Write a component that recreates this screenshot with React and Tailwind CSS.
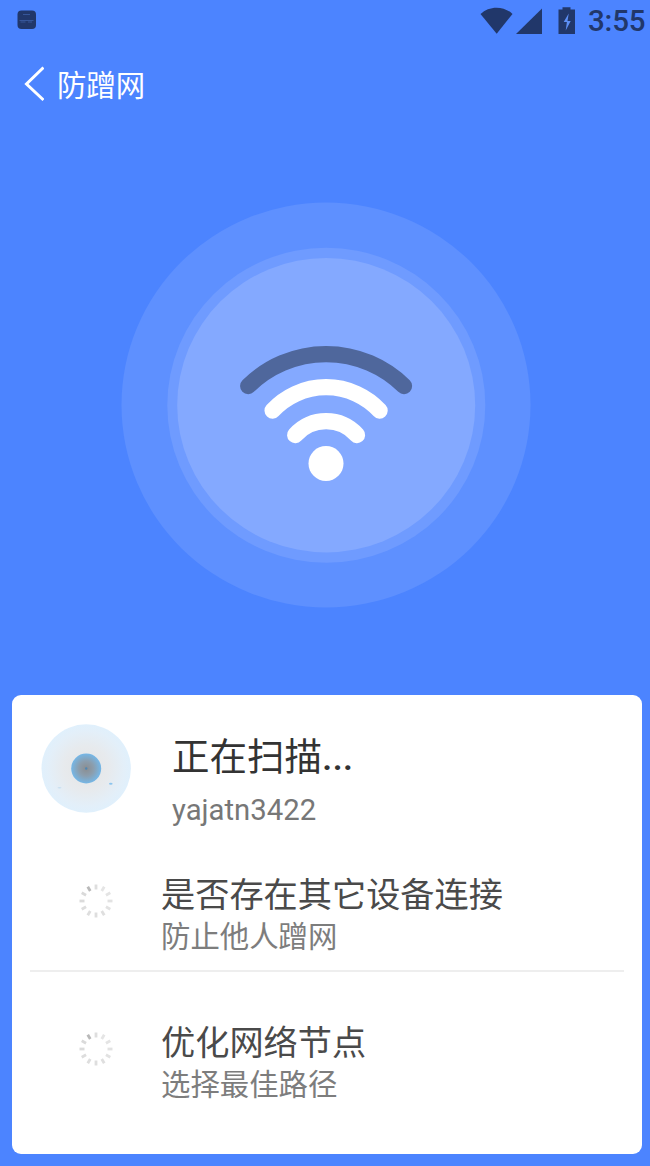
/**
 * Status bar icons and clock along the top edge of the screen.
 */
const StatusBar = () => {
  return (
    <header className="flex h-10 items-center justify-between pl-[17px] pr-[5px] text-[#21376a]">
      <svg className="size-5" viewBox="0 0 20 20">
        <rect x="0.5" y="0.5" width="18.5" height="18.5" rx="4" fill="#21376b" />
        <path d="M6 4.500h7M2.500 10.500h14M3.500 12h5M11 12h4" stroke="#36569a" strokeWidth="1" />
      </svg>
      <div className="flex items-center">
        <svg className="h-[27px] w-[96px]" viewBox="480 6 96 27" fill="currentColor">
          <path d="M480.500 13C489 4.500 504 4.500 512.500 13L496.700 32.700Z" />
          <path d="M542 7.500V33H516Z" />
          <path d="M558.500 8.500h4V6.200h8v2.300h4.500V33h-16.500Z" />
          <path d="M568.700 12.500l-5 8.500h3.200l-1.200 8.500 5-9.500h-3.200Z" fill="#5d8ff5" />
        </svg>
        <span className="ml-3 w-[57px] whitespace-nowrap pt-[2px] text-[29.500px] leading-10 tracking-[-0.2px] font-medium">3:55</span>
      </div>
    </header>
  );
};

/**
 * Concentric halo with the Wi-Fi symbol in the middle.
 */
const WifiHalo = () => {
  return (
    <svg className="mx-auto block h-[408px] w-[412px]" viewBox="120 201 412 408">
      <ellipse cx="326" cy="405" rx="204.500" ry="202.500" fill="#5e90ff" />
      <ellipse cx="326.300" cy="405.300" rx="159" ry="157.500" fill="#6f9bff" />
      <ellipse cx="326.200" cy="405.200" rx="149" ry="147.200" fill="#84a9ff" />
      <g fill="none" strokeWidth="16.300" strokeLinecap="round">
        <path d="M248.200 386A111 111 0 0 1 404 386" stroke="#4f679c" />
        <path d="M272.600 410.500A73 73 0 0 1 379.600 410.500" stroke="#fff" />
        <path d="M295.200 435A41.500 41.500 0 0 1 357 435" stroke="#fff" />
      </g>
      <circle cx="326" cy="463.500" r="17.500" fill="#fff" />
    </svg>
  );
};

const RadarIcon = () => {
  return (
    <svg className="mt-px size-[90px] shrink-0" viewBox="0 0 90 90">
      <defs>
        <radialGradient id="radarOuter">
          <stop offset="0" stopColor="#e5e5e5" />
          <stop offset="0.5" stopColor="#e7eaed" />
          <stop offset="0.85" stopColor="#e3eff9" />
          <stop offset="1" stopColor="#e0f0fc" />
        </radialGradient>
        <radialGradient id="radarInner">
          <stop offset="0" stopColor="#8b8d90" />
          <stop offset="0.5" stopColor="#8b9eae" />
          <stop offset="1" stopColor="#75b7e7" />
        </radialGradient>
      </defs>
      <ellipse cx="45.200" cy="44.500" rx="44.700" ry="44.200" fill="url(#radarOuter)" />
      <circle cx="45.200" cy="44.500" r="15" fill="url(#radarInner)" />
      <circle cx="45.200" cy="44.500" r="1.200" fill="#4f88b5" />
      <ellipse cx="69.800" cy="59.800" rx="1.800" ry="1" fill="#8cc5ee" />
      <ellipse cx="18.500" cy="63.800" rx="2" ry="0.7" fill="#c8dff0" />
    </svg>
  );
};

// Starts one step left of twelve o'clock, where the darkest spoke sits
const SPOKES = [
  "#b9b9b9", "#dedede", "#e5e5e5", "#e4e4e4", "#e2e2e2", "#e2e2e2",
  "#dfdfdf", "#dedede", "#dedede", "#dddddd", "#dbdbdb", "#dadada",
];

const Spinner = () => {
  return (
    <svg className="size-9 shrink-0" viewBox="-18 -18 36 36">
      {SPOKES.map((color, i) => (
        <path
          key={i}
          d="M0-16.500V-11.500"
          stroke={color}
          strokeWidth="2.800"
          transform={`rotate(${(i - 1) * 30})`}
        />
      ))}
    </svg>
  );
};

const CheckRow = ({ title, detail }) => {
  return (
    <div className="flex items-start pl-[66px]">
      <div className="mt-[10px] flex">
        <Spinner />
      </div>
      <div className="ml-[47px] whitespace-nowrap">
        <p className="text-[34.200px] leading-[44px] text-[#4a4a4a]">{title}</p>
        <p className="text-[29.400px] leading-10 text-[#7d7d7d]">{detail}</p>
      </div>
    </div>
  );
};

const App = () => {
  return (
    <div className="flex h-[1166px] w-[650px] flex-col overflow-hidden bg-[#4c84ff] font-['Roboto','Noto_Sans_CJK_SC',sans-serif]">
      <StatusBar />
      <nav className="flex h-[88px] items-center pl-6 text-white">
        <svg className="h-9 w-5" viewBox="0 0 20 36" fill="none" stroke="currentColor" strokeWidth="3">
          <path d="M19.500 1.500L2.500 18L19.500 34" />
        </svg>
        <h1 className="ml-[13px] pt-[3px] text-[29.400px] leading-10">防蹭网</h1>
      </nav>
      <div className="mt-[73px] pl-[2px]">
        <WifiHalo />
      </div>
      <main className="ml-3 mt-[86px] h-[459px] w-[630px] rounded-[9px] bg-white">
        <div className="flex pl-[29px] pt-[28px]">
          <RadarIcon />
          <div className="ml-[41px] whitespace-nowrap">
            <h2 className="mt-[6px] text-[37.500px] leading-[56px] text-[#333]">
              正在扫描<span className="font-medium">...</span>
            </h2>
            <p className="-mt-px text-[29.300px] leading-[52px] text-[#777]">yajatn3422</p>
          </div>
        </div>
        <div className="mt-[37px]">
          <CheckRow title="是否存在其它设备连接" detail="防止他人蹭网" />
          <hr className="mx-[18px] mt-[13px] border-t-2 border-[#eee]" />
          <div className="mt-[49px]">
            <CheckRow title="优化网络节点" detail="选择最佳路径" />
          </div>
        </div>
      </main>
    </div>
  );
};

export default App;
